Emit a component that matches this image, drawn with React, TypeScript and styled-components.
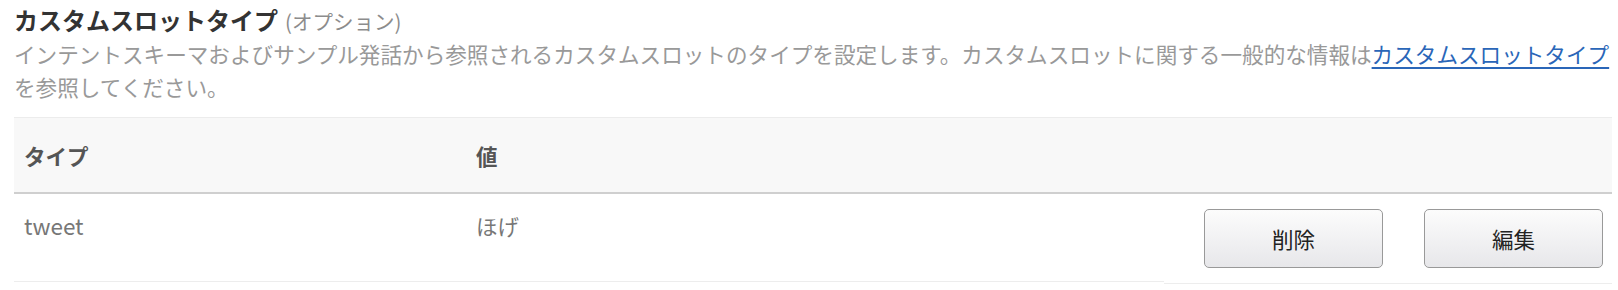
import React from 'react'
import styled, { createGlobalStyle } from 'styled-components'

const GlobalStyle = createGlobalStyle`
  body {
    margin: 0;
    background: #fff;
    font-family: "Noto Sans CJK JP", "Noto Sans", sans-serif;
  }
`

const Section = styled.div`
  padding: 4px 0 0 14px;
`

const Title = styled.h2`
  margin: 0;
  font-size: 24px;
  line-height: 32px;
  font-weight: 700;
  color: #333;
`

const Optional = styled.span`
  font-size: 20.5px;
  font-weight: 400;
  color: #8c8c8c;
  margin-left: 7px;
`

const Description = styled.p`
  margin: 0 0 14px;
  font-size: 21.6px;
  line-height: 33px;
  color: #999;
`

const Link = styled.a`
  color: #2a66b8;
  text-decoration: underline;
  text-underline-offset: 4px;
  white-space: nowrap;
`

const Table = styled.div`
  width: 1598px;
`

const HeadRow = styled.div`
  display: grid;
  grid-template-columns: 452px 698px 1fr;
  height: 74px;
  background: #f8f8f8;
  border-top: 1px solid #ececec;
  border-bottom: 2px solid #cfcfcf;
`

const HeadCell = styled.div`
  display: flex;
  align-items: center;
  padding: 0 10px;
  font-size: 21.5px;
  font-weight: 700;
  color: #555;
`

const BodyRow = styled.div`
  display: grid;
  grid-template-columns: 452px 698px 1fr;
  align-items: start;
`

const Cell = styled.div`
  height: 88px;
  box-sizing: border-box;
  padding: 15px 10px 0;
  font-size: 21.5px;
  line-height: 33px;
  color: #777;
  border-bottom: 1px solid #ededed;
`

const Latin = styled.span`
  font-size: 22.5px;
`

const ActionCell = styled.div`
  height: 90px;
  box-sizing: border-box;
  display: flex;
  justify-content: flex-end;
  gap: 41px;
  padding: 15px 9px 0 0;
  border-bottom: 1px solid #ededed;
`

const Button = styled.button`
  width: 179px;
  height: 59px;
  border: 1px solid #999;
  border-radius: 5px;
  background: linear-gradient(#fcfcfc, #e7e7ea);
  font-family: inherit;
  font-size: 21.5px;
  color: #222;
  cursor: pointer;
`

const slots = [{ type: 'tweet', value: 'ほげ' }]

export default function App() {
  return (
    <>
      <GlobalStyle />
      <Section>
        <Title>
          カスタムスロットタイプ<Optional>(オプション)</Optional>
        </Title>
        <Description>
          インテントスキーマおよびサンプル発話から参照されるカスタムスロットのタイプを設定します。カスタムスロットに関する一般的な情報は
          <Link href="#">カスタムスロットタイプ</Link>
          を参照してください。
        </Description>
        <Table>
          <HeadRow>
            <HeadCell>タイプ</HeadCell>
            <HeadCell>値</HeadCell>
            <HeadCell />
          </HeadRow>
          {slots.map((s) => (
            <BodyRow key={s.type}>
              <Cell>
                <Latin>{s.type}</Latin>
              </Cell>
              <Cell>{s.value}</Cell>
              <ActionCell>
                <Button>削除</Button>
                <Button>編集</Button>
              </ActionCell>
            </BodyRow>
          ))}
        </Table>
      </Section>
    </>
  )
}
